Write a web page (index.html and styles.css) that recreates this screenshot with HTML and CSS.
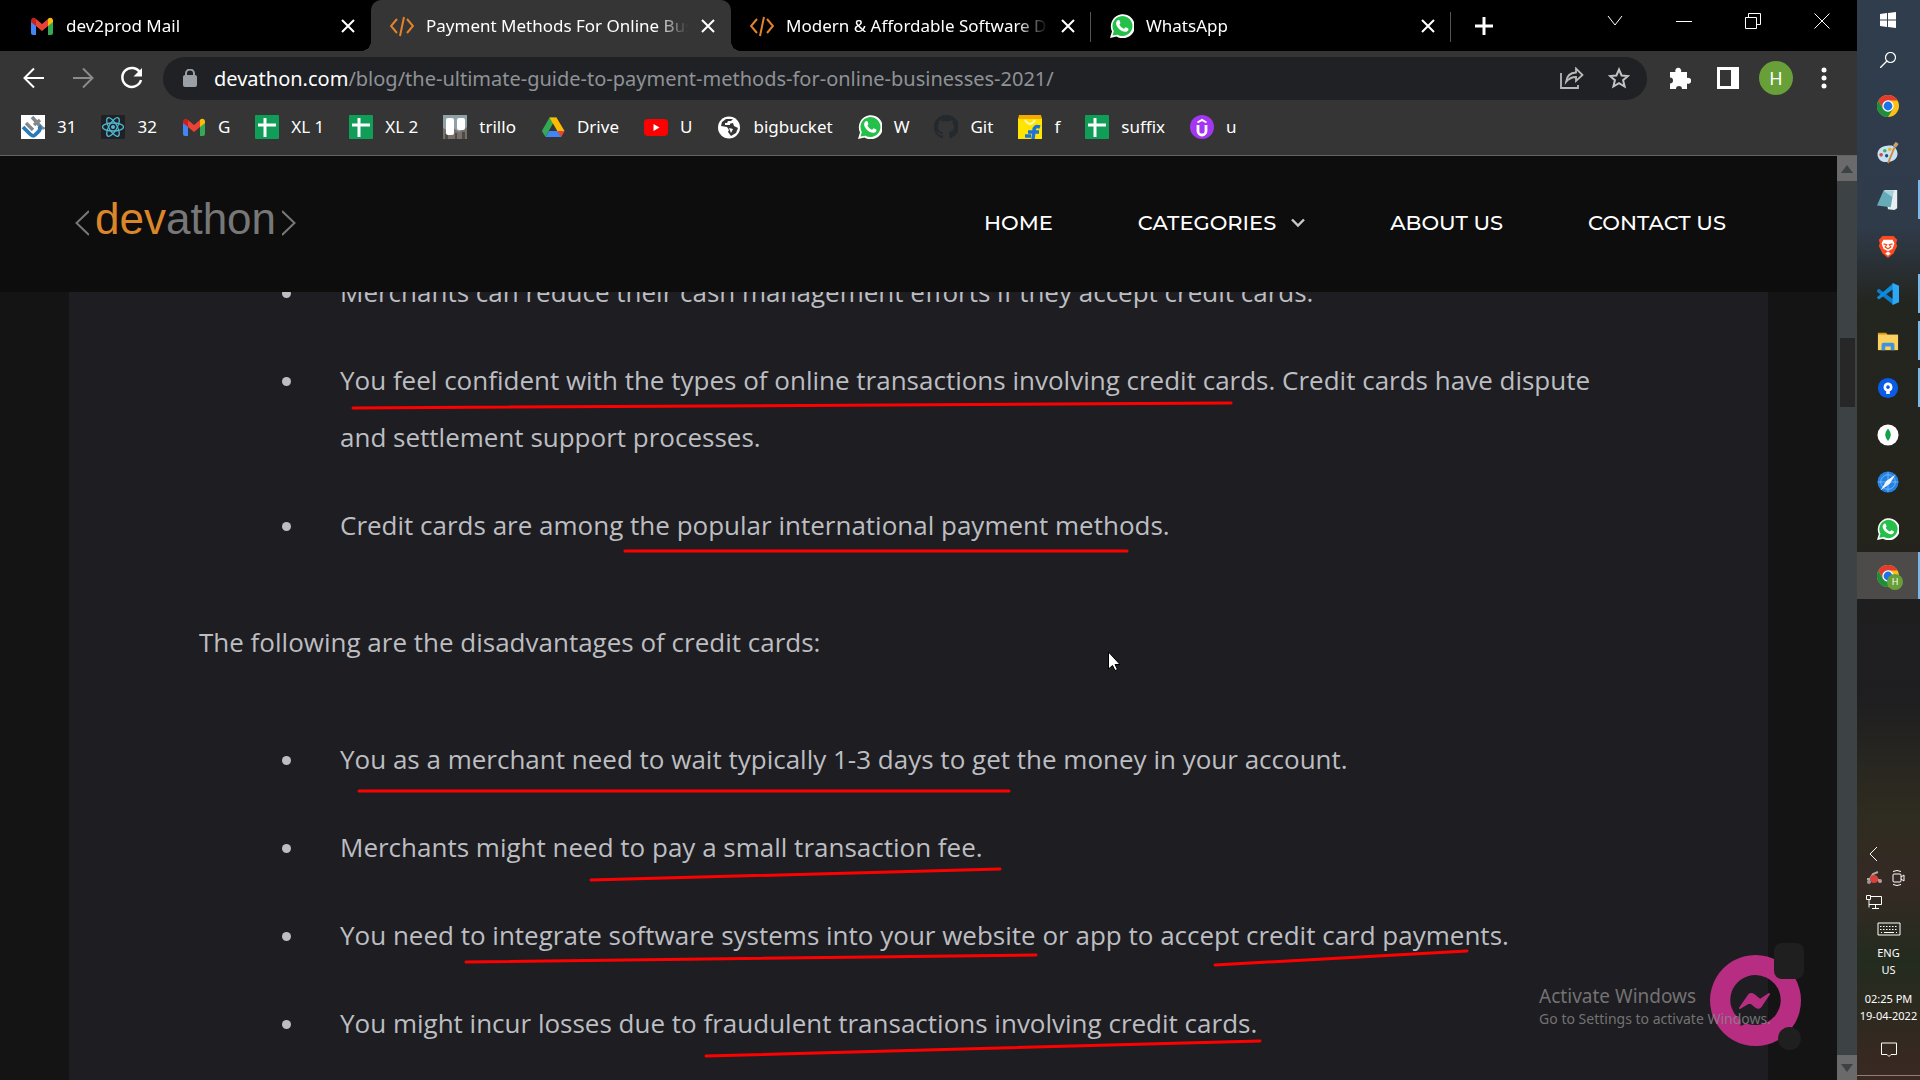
FILE: index.html
```
<!DOCTYPE html>
<html lang="en">
<head>
<meta charset="utf-8">
<title>Payment Methods For Online Businesses</title>
<link rel="stylesheet" href="styles.css">
</head>
<body>
<svg class="defs" aria-hidden="true">
  <symbol id="gmail" viewBox="0 0 24 24"><path fill="#4285f4" d="M1 6v13q0 2 2 2h3V10z"/><path fill="#34a853" d="M18 10v11h3q2 0 2-2V6z"/><path fill="#ea4335" d="M6 5l6 5 6-5v7l-6 5-6-5z"/><path fill="#fbbc04" d="M18 12V5l1-1q3-1 4 2v2z"/><path fill="#c5221f" d="M1 8V6q1-3 4-2l1 1v7z"/></symbol>
  <symbol id="code" viewBox="0 0 24 24"><path fill="none" stroke="#e5832a" stroke-width="2" d="M7 5L1 12l6 7M17 5l6 7-6 7M14 3l-4 19"/></symbol>
  <symbol id="whatsapp" viewBox="0 0 24 24"><path fill="#fff" d="M0 24l2-6.500A12 12 0 1 1 6.500 22.500z"/><path fill="#25c04a" d="M2.500 21.500l1.300-4.500A10 10 0 1 1 7.500 20.700z"/><path fill="#fff" d="M8.500 6c.5 0 .8 0 1 .6l.9 2.200c.2.600-.9 1.500-.9 1.900 1 2 2.500 3.200 4.500 4 .6 0 1.400-1.600 1.900-1.400l2.300 1.100c.8.500-.2 3.400-3 3.400-4.500-.2-9-5-9.100-8.400C6.200 7.500 7.500 6 8.500 6z"/></symbol>
  <symbol id="sheet" viewBox="0 0 24 24"><rect width="24" height="24" rx="1" fill="#0f9d58"/><path stroke="#fff" stroke-width="3" d="M10 3v19M3 10h18"/></symbol>
  <symbol id="close" viewBox="0 0 14 14"><path fill="none" stroke="#fff" stroke-width="2" d="M1 1l12 12M13 1L1 13"/></symbol>
  <symbol id="chrome" viewBox="0 0 24 24"><circle cx="12" cy="12" r="12" fill="#fbc116"/><path fill="#e33b2e" d="M1.600 6A12 12 0 0 1 22.400 6H12L6.500 15z"/><path fill="#1e8e3e" d="M1.600 6A12 12 0 0 0 12 24l5.500-9-5.500 3-5.500-3z"/><circle cx="12" cy="12" r="6.200" fill="#fff"/><circle cx="12" cy="12" r="4.800" fill="#1a73e8"/></symbol>
</svg>

<div class="desktop">
<div class="browser">
  <div class="tabstrip">
    <div class="tab"><svg class="fav"><use href="#gmail"/></svg><span class="tab-title">dev2prod Mail</span><button class="tab-close" aria-label="Close tab"><svg><use href="#close"/></svg></button></div>
    <div class="tab active"><svg class="fav"><use href="#code"/></svg><span class="tab-title">Payment Methods For Online Businesses</span><button class="tab-close" aria-label="Close tab"><svg><use href="#close"/></svg></button></div>
    <div class="tab divided"><svg class="fav"><use href="#code"/></svg><span class="tab-title">Modern &amp; Affordable Software Development</span><button class="tab-close" aria-label="Close tab"><svg><use href="#close"/></svg></button></div>
    <div class="tab divided"><svg class="fav"><use href="#whatsapp"/></svg><span class="tab-title">WhatsApp</span><button class="tab-close" aria-label="Close tab"><svg><use href="#close"/></svg></button></div>
    <button class="new-tab" aria-label="New tab"><svg width="18" height="18" viewBox="0 0 18 18"><path stroke="#fff" stroke-width="3" d="M9 0v18M0 9h18"/></svg></button>
    <div class="window-buttons">
      <button aria-label="Search tabs"><svg width="16" height="16" viewBox="0 0 16 16"><path d="M1 3l7 9 7-9"/></svg></button>
      <button aria-label="Minimise"><svg width="16" height="16" viewBox="0 0 16 16"><path d="M0 8.500h16"/></svg></button>
      <button aria-label="Restore"><svg width="16" height="16" viewBox="0 0 16 16"><path d="M.5 4.500h11v11H.5zM3.500 4V.5h12v11H12"/></svg></button>
      <button aria-label="Close"><svg width="16" height="16" viewBox="0 0 16 16"><path d="M.5.5l15 15M15.500.5l-15 15"/></svg></button>
    </div>
  </div>

  <div class="toolbar">
    <div class="history">
      <button aria-label="Back"><svg width="22" height="22" viewBox="0 0 22 22"><path fill="none" stroke="#fff" stroke-width="2" d="M21 11H2M11 1.500L1.500 11l9.500 9.500"/></svg></button>
      <button aria-label="Forward"><svg width="22" height="22" viewBox="0 0 22 22"><path fill="none" stroke="#8b8b8b" stroke-width="2" d="M1 11h19M11 1.500l9.500 9.500-9.500 9.500"/></svg></button>
      <button aria-label="Reload"><svg width="24" height="24" viewBox="0 0 24 24"><path fill="none" stroke="#fff" stroke-width="2.500" d="M20 6.500A9.500 9.500 0 1 0 21 14"/><path fill="#fff" d="M22 2v8.500h-8.500z"/></svg></button>
    </div>
    <div class="omnibox">
      <svg width="14" height="18" viewBox="0 0 14 18"><rect y="6" width="14" height="12" rx="2" fill="#9aa0a6"/><path fill="none" stroke="#9aa0a6" stroke-width="2" d="M3 7V4.500a4 4 0 0 1 8 0V7"/></svg>
      <span class="url"><b>devathon.com</b>/blog/the-ultimate-guide-to-payment-methods-for-online-businesses-2021/</span>
      <button aria-label="Share"><svg width="24" height="22" viewBox="0 0 24 22"><path fill="none" stroke="#b9b9b9" stroke-width="1.800" d="M1 6v15h17v-3M6 15q1-9 10-9.500V1.500L22.500 8 16 14v-4q-6 0-10 5z"/></svg></button>
      <button aria-label="Bookmark"><svg width="22" height="22" viewBox="0 0 22 22"><path fill="none" stroke="#c3c3c3" stroke-width="2" d="M11 2.500l2.600 6 6.400.5-4.900 4.200 1.500 6.300-5.600-3.400-5.600 3.400 1.500-6.300L2 9l6.400-.5z"/></svg></button>
    </div>
    <div class="actions">
      <button aria-label="Extensions"><svg width="22" height="22" viewBox="0 0 22 22"><path fill="#fff" d="M1 5h5.500a3 3 0 1 1 5.500 0H18v6a3 3 0 1 1 0 5.500V22h-5a3 3 0 0 0-6 0H1v-5.500a3 3 0 0 0 0-6z"/></svg></button>
      <button aria-label="Side panel"><svg width="22" height="22" viewBox="0 0 22 22"><path fill="#fff" fill-rule="evenodd" d="M0 0h22v22H0zM3 3v16h11V3z"/></svg></button>
      <button class="avatar">H</button>
      <button aria-label="Menu"><svg width="22" height="22" viewBox="0 0 22 22"><g fill="#fff"><circle cx="11" cy="3" r="2.500"/><circle cx="11" cy="11" r="2.500"/><circle cx="11" cy="19" r="2.500"/></g></svg></button>
    </div>
  </div>

  <nav class="bookmarks">
    <a href="#"><svg viewBox="0 0 24 24"><rect width="24" height="24" fill="#fff"/><path fill="none" stroke="#85888b" stroke-width="3.500" d="M11 2l8 9q3 3 4 1M5 8l7 7M13 10l6-5"/><path fill="none" stroke="#2a7ab8" stroke-width="3.800" d="M2 12l7 7q3 3 5 1l4-4q2-3 0-5"/></svg>31</a>
    <a href="#"><svg viewBox="0 0 24 24"><rect width="24" height="24" rx="1" fill="#202124"/><g fill="none" stroke="#4fb9d3" stroke-width="1.300"><ellipse cx="12" cy="12" rx="10.500" ry="4"/><ellipse cx="12" cy="12" rx="10.500" ry="4" transform="rotate(60 12 12)"/><ellipse cx="12" cy="12" rx="10.500" ry="4" transform="rotate(120 12 12)"/></g><circle cx="12" cy="12" r="2" fill="#4fb9d3"/></svg>32</a>
    <a href="#"><svg><use href="#gmail"/></svg>G</a>
    <a href="#"><svg><use href="#sheet"/></svg>XL 1</a>
    <a href="#"><svg><use href="#sheet"/></svg>XL 2</a>
    <a href="#"><svg viewBox="0 0 24 24"><path fill="#8ea0a8" d="M0 0h24v24H0z"/><path fill="#77706a" d="M0 13l5 3 5-3 6 4 8-5v12H0z"/><path fill="#4d4944" d="M2 19h3v5H2zM12 18h2v6h-2zM19 17h3v7h-3z"/><rect x="3" y="3" width="8" height="17" rx="2" fill="#fff"/><rect x="14" y="3" width="8" height="12" rx="2" fill="#fff"/></svg>trillo</a>
    <a href="#"><svg viewBox="0 0 24 24"><path fill="#34a853" d="M8.500 2.500h7L4.500 22 .8 16z"/><path fill="#fbbc04" d="M8.500 2.500h7L23.500 16h-7.300z"/><path fill="#4285f4" d="M4.600 22l3.500-6h15.400l-3.500 6z"/><path fill="#ea4335" d="M16.200 16h7.300L20 22z"/><path fill="#353535" d="M12 9l4 7H8z"/></svg>Drive</a>
    <a href="#"><svg viewBox="0 0 24 24"><rect y="4" width="24" height="17" rx="4" fill="#f00"/><path fill="#fff" d="M9.500 9l6 3.500-6 3.500z"/></svg>U</a>
    <a href="#"><svg viewBox="0 0 24 24"><circle cx="12" cy="12.500" r="11" fill="#fff"/><path fill="#353535" d="M9 4l-4 3-1 4 6 1 2 3-1 2 3 4 5-3 2-5-4-2-1-3-4 1-2-1 1-2h3l2-2z"/><path fill="#fff" d="M8 8h5v2H8zM12 13l4 1-2 4z"/></svg>bigbucket</a>
    <a href="#"><svg><use href="#whatsapp"/></svg>W</a>
    <a href="#"><svg viewBox="0 0 24 24"><path fill="#24292e" d="M12 0a12 12 0 0 0-4 23.400c.7 0 1-.3 1-.8v-2.200c-4 .7-4.500-2-5.300-2.700-.4-.5-1.300-.9-1-1.100 2.500-.5 2.600 2.600 5 2.400 1 0 1.200-.8 1.700-1.400C6 17 4 15.500 4 11.600c0-1.300.5-2.400 1.300-3.200-.3-.8-.3-2 .2-3.200 1.200 0 2.300.6 3.300 1.300a12 12 0 0 1 6.200 0c1-.7 2.200-1.300 3.400-1.300.5 1.200.5 2.400.1 3.200.9.800 1.400 1.900 1.400 3.200 0 4-2 5.400-5.300 5.900.6.500.9 1.300.9 2.600v2.500c0 .5.400.9 1 .8A12 12 0 0 0 12 0z"/></svg>Git</a>
    <a href="#"><svg viewBox="0 0 24 24"><path fill="#ffe500" d="M0 3h24v21H0z"/><path fill="#f7a800" d="M1 0h22l1 4H0z"/><path fill="none" stroke="#fff8b0" stroke-width="2" d="M7 5q5 8 10 0"/><path fill="none" stroke="#1c72d8" stroke-width="3.500" d="M22 12q-6-2-6 4l-1 8M10 17h11M7 21h6"/></svg>f</a>
    <a href="#"><svg><use href="#sheet"/></svg>suffix</a>
    <a href="#"><svg viewBox="0 0 24 24"><circle cx="12" cy="12" r="12" fill="#a435f0"/><path fill="none" stroke="#fff" stroke-width="2.800" d="M8 10v6a4 4 0 0 0 8 0v-6"/><path fill="none" stroke="#fff" stroke-width="2" d="M7.500 7.500L12 4.800l4.500 2.700"/></svg>u</a>
  </nav>

  <div class="viewport">
    <div class="page">
      <header class="site-header">
        <a class="logo" href="#">
          <svg width="14" height="26" viewBox="0 0 14 26"><path d="M14 1L1.500 13 14 25"/></svg><span><strong>dev</strong>athon</span><svg width="14" height="26" viewBox="0 0 14 26"><path d="M0 1l12.500 12L0 25"/></svg>
        </a>
        <nav class="site-nav">
          <a href="#">HOME</a>
          <a href="#">CATEGORIES <svg width="14" height="10" viewBox="0 0 14 10"><path fill="none" stroke="#c8c8c8" stroke-width="2.400" d="M1 1.500l6 6 6-6"/></svg></a>
          <a href="#">ABOUT US</a>
          <a href="#">CONTACT US</a>
        </nav>
      </header>
      <article class="article">
        <ul>
          <li><span>Merchants can reduce their cash management efforts if they accept credit cards.</span></li>
          <li><span>You feel confident with the types of online transactions involving credit cards. Credit cards have dispute and settlement support processes.</span></li>
          <li><span>Credit cards are among the popular international payment methods.</span></li>
        </ul>
        <p>The following are the disadvantages of credit cards:</p>
        <ul>
          <li><span>You as a merchant need to wait typically 1-3 days to get the money in your account.</span></li>
          <li><span>Merchants might need to pay a small transaction fee.</span></li>
          <li><span>You need to integrate software systems into your website or app to accept credit card payments.</span></li>
          <li><span>You might incur losses due to fraudulent transactions involving credit cards.</span></li>
        </ul>
      </article>
      <div class="chat">
        <svg width="94" height="112" viewBox="0 0 94 112"><path fill="#b72d82" fill-rule="evenodd" d="M45.500 12a45.500 45.500 0 1 0 .01 0zM45.500 32a25.500 25 0 1 1-9 48.500l-6 2.500v-6A25.500 25 0 0 1 45.500 32z"/><path fill="#b72d82" stroke="#b72d82" stroke-width="2" stroke-linejoin="round" d="M30 65l9-13q2-2 5 0l6 5 9-6-8 12q-2 3-5 1l-6-5z"/><rect x="64" width="30" height="36" rx="8" fill="#1f1f1f"/><circle cx="79.500" cy="95.500" r="11.500" fill="#1f1f1f"/></svg>
      </div>
    </div>
    <div class="scrollbar">
      <div class="arrow"><svg width="12" height="8" viewBox="0 0 12 8"><path fill="#3d4245" d="M6 0l6 8H0z"/></svg></div>
      <div class="track"><div class="thumb"></div></div>
      <div class="arrow"><svg width="12" height="8" viewBox="0 0 12 8"><path fill="#3d4245" d="M0 0h12L6 8z"/></svg></div>
    </div>
  </div>
</div>

<aside class="taskbar">
  <button class="short" aria-label="Start"><svg width="16" height="16" viewBox="0 0 16 16"><path fill="#fff" d="M0 2l7-1v6.500H0zM8 .9L16 0v7.500H8zM0 8.500h7V15l-7-1zM8 8.500h8V16l-8-1z"/></svg></button>
  <button class="short" aria-label="Search"><svg width="16" height="16" viewBox="0 0 16 16"><circle cx="10.500" cy="5.500" r="5" fill="none" stroke="#fff" stroke-width="1.200"/><path stroke="#fff" stroke-width="1.300" d="M7 9L0 16"/></svg></button>
  <button aria-label="Chrome"><svg><use href="#chrome"/></svg></button>
  <button aria-label="Paint"><svg viewBox="0 0 24 24"><path fill="#c5e3f5" d="M11 4C4 4-1 10 1 16s9 7 15 5 8-8 5-13-6-4-10-4z"/><circle cx="4.500" cy="14" r="2" fill="#d94b43"/><circle cx="8.500" cy="9.500" r="2" fill="#53b04c"/><circle cx="14" cy="8" r="2" fill="#efb32c"/><circle cx="10.500" cy="15" r="1.800" fill="#1f4f7d"/><path stroke="#d48634" stroke-width="2" d="M12 23l7-17"/><path stroke="#c4a26f" stroke-width="4" d="M19 5l3-4"/></svg></button>
  <button class="open" aria-label="Notepad"><svg viewBox="0 0 24 24"><path fill="#e6eef0" d="M8 1h14v20l-3 2-7-1z"/><path fill="#67abb9" d="M7 2h11l-3 18-15-2z"/><path fill="#a5d3dc" d="M7 2h11l-1 7z"/></svg></button>
  <button aria-label="Brave"><svg viewBox="0 0 24 24"><path fill="#fb4a1f" d="M6 0h12l4 4-1 4 1 3-4 8-6 5-6-5-4-8 1-3-1-4z"/><path fill="#fff" d="M7 4h10l2 4-2 6-5 2.500L7 14 5 8zM12 17l3 2-3 2.500L9 19z"/><path stroke="#fb4a1f" stroke-width="1.400" fill="none" d="M7 8.500l3.500 1L9 12l3 2 3-2-1.500-2.500 3.500-1"/></svg></button>
  <button class="open" aria-label="VS Code"><svg viewBox="0 0 24 24"><path fill="#0b7dca" d="M0 8l2-1.800L18 18v6L0 9.500z"/><path fill="#0e8bdb" d="M0 15.500L18 0v6.500L2 18 0 16z"/><path fill="#2da8f4" d="M17 0l7 3v18l-7 3z"/></svg></button>
  <button class="open" aria-label="Explorer"><svg viewBox="0 0 24 24"><path fill="#d99a14" d="M1 3h9l2 3H1z"/><path fill="#fcd060" d="M1 5h22v17H1z"/><path fill="#3d94d8" d="M5 22v-6q0-2 2-2h10q2 0 2 2v6h-4v-4H9v4z"/></svg></button>
  <button class="open" aria-label="Sourcetree"><svg viewBox="0 0 24 24"><circle cx="12" cy="12" r="11" fill="#0a5ce6"/><path fill="#fff" fill-rule="evenodd" d="M12 6a5 5 0 0 1 2 9.500v3h-4v-3A5 5 0 0 1 12 6zm0 3a2 2 0 1 0 .01 0z"/></svg></button>
  <button aria-label="MongoDB"><svg viewBox="0 0 24 24"><circle cx="12" cy="12" r="11.500" fill="#fff"/><path fill="#13a24b" d="M12 5q6 7 0 13.500Q6 12 12 5z"/></svg></button>
  <button aria-label="Safari"><svg viewBox="0 0 24 24"><circle cx="12" cy="12" r="11.500" fill="#2381e3"/><circle cx="12" cy="12" r="8" fill="none" stroke="#76b7f3"/><path stroke="#76b7f3" d="M12 1v22M1 12h22"/><path fill="#f2f6fa" d="M20 4l-6 10-10 7 6-10z"/></svg></button>
  <button aria-label="WhatsApp"><svg><use href="#whatsapp"/></svg></button>
  <button class="open current" aria-label="Chrome, profile H"><svg><use href="#chrome"/></svg><span class="profile">H</span></button>

  <div class="tray">
    <div class="tray-icons">
      <svg viewBox="0 0 16 16"><path d="M11 1L4 8l7 7"/></svg><span></span>
      <svg viewBox="0 0 16 16"><path stroke="#aaa" stroke-width="2" d="M2 12l5-8 5-2M10 8l5 4M1 9h6"/><circle cx="8" cy="9" r="4" fill="#d94038" stroke="none"/><circle cx="3" cy="12" r="2" fill="#999" stroke="none"/><circle cx="14" cy="11" r="2" fill="#b99" stroke="none"/></svg>
      <svg viewBox="0 0 16 16"><rect x="3" y="4" width="8" height="8" rx="1"/><path d="M11 7l3-2v6l-3-2M3 1.500q4-2 8 0M3 14.500q4 2 8 0"/></svg>
      <svg viewBox="0 0 16 16"><path d="M5 2.500h10.500v8H3M.5 1.500h4v4h-4zM3 6v7.500M9.500 11v3M6 14.500h7"/></svg><span></span>
    </div>
    <svg width="24" height="14" viewBox="0 0 24 14"><path d="M1 1h22v12H1z"/><path stroke-dasharray="1.500 1.500" d="M3 4.500h18M3 7.500h18"/><path d="M4 10.500h1M7 10.500h10M19 10.500h1"/></svg>
    <div class="lang">ENG<br>US</div>
    <div class="clock">02:25 PM<br>19-04-2022</div>
    <svg width="16" height="16" viewBox="0 0 16 16"><path d="M.5 1h15v11.500H10L8 14.500l-2-2H.5z"/></svg>
    <div class="show-desktop"></div>
  </div>
</aside>
</div>

<div class="watermark"><div class="watermark-title">Activate Windows</div><div>Go to Settings to activate Windows.</div></div>

<svg class="markup" aria-hidden="true">
  <g stroke="#f00" stroke-width="3" stroke-linecap="round">
    <path d="M353 408L1231 403M625 551H1127M359 791H1009M591 880L1000 869M466 962L1036 955M1215 965L1467 951M706 1056L1260 1041"/>
  </g>
  <path fill="#fff" stroke="#000" d="M1108.500 652v17l4-3.500 2.500 5 2.500-1-2.500-5h5z"/>
</svg>
</body>
</html>
```
FILE: styles.css
```
* { box-sizing: border-box; }
body {
  margin: 0;
  height: 100vh;
  overflow: hidden;
  position: relative;
  background: #141414;
  font-family: "Segoe UI", "Noto Sans", sans-serif;
  color: #fff;
}
a { color: inherit; text-decoration: none; }
button {
  margin: 0; padding: 0; border: 0;
  background: none; color: inherit; font: inherit;
  display: flex; align-items: center; justify-content: center;
}
svg { flex: none; display: block; }
.defs { position: absolute; width: 0; height: 0; }

.desktop { display: flex; height: 100%; }
.browser { flex: 1; min-width: 0; display: flex; flex-direction: column; }

/* Tab strip */
.tabstrip { display: flex; height: 51px; padding-left: 11px; background: #000; }
.tab {
  position: relative;
  flex: 0 1 360px; min-width: 0;
  display: flex; align-items: center;
  padding: 0 15px 0 19px; gap: 12px;
  font-size: 17px;
}
.active { background: #353535; border-radius: 10px 10px 0 0; }
.active::before, .active::after {
  content: ""; position: absolute; bottom: 0; width: 10px; height: 10px;
}
.active::before { left: -10px; background: radial-gradient(circle at 0 0, #000 10px, #353535 10px); }
.active::after { right: -10px; background: radial-gradient(circle at 100% 0, #000 10px, #353535 10px); }
.divided::after {
  content: ""; position: absolute; right: 0; top: 12px; width: 1px; height: 30px; background: #555;
}
.fav { width: 24px; height: 24px; }
.tab-title {
  flex: 1; overflow: hidden; white-space: nowrap;
  mask-image: linear-gradient(to right, #000 calc(100% - 32px), transparent);
}
.tab-close { width: 16px; height: 16px; }
.tab-close svg { width: 14px; height: 14px; }
.new-tab { width: 66px; }
.window-buttons { display: flex; margin-left: auto; height: 42px; padding-right: 1px; }
.window-buttons button { width: 69px; }
.window-buttons path { fill: none; stroke: #fff; }

/* Toolbar */
.toolbar { display: flex; align-items: center; height: 54px; background: #353535; }
.history { display: flex; width: 163px; padding-left: 9px; }
.history button { width: 49px; }
.omnibox {
  flex: 1; height: 43px; display: flex; align-items: center; gap: 24px;
  padding: 0 17px 0 20px; border-radius: 22px; background: #202124;
}
.omnibox > svg { margin-right: -7px; }
.url { flex: 1; font-size: 20px; color: #8f9296; white-space: nowrap; }
.url b { font-weight: 400; color: #fff; }
.actions { display: flex; align-items: center; padding: 0 9px; }
.actions button { width: 48px; height: 34px; }
.actions .avatar { width: 34px; margin: 0 7px; border-radius: 50%; background: #689f38; font-size: 18px; }

/* Bookmarks bar */
.bookmarks {
  display: flex; gap: 25px; height: 51px; padding: 0 21px 7px;
  align-items: center; background: #353535; border-bottom: 1px solid #636363;
  font-size: 17px; white-space: nowrap;
}
.bookmarks a { display: flex; align-items: center; gap: 12px; }
.bookmarks svg { width: 24px; height: 24px; }

/* Web page */
.viewport { flex: 1; min-height: 0; display: flex; }
.page { flex: 1; min-width: 0; position: relative; overflow: hidden; background: #141414; }
.site-header {
  position: relative; z-index: 1;
  display: flex; align-items: center; justify-content: space-between;
  height: 136px; padding: 0 111px 0 75px; background: #0d0d0d;
}
.logo {
  display: flex; align-items: center; gap: 6px; padding-bottom: 10px;
  font: 44px/50px "Liberation Sans", Arial, sans-serif; color: #777;
}
.logo strong { font-weight: 400; color: #dc862b; }
.logo path { fill: none; stroke: #777; stroke-width: 2; }
.logo svg { margin-top: 7px; }
.site-nav { display: flex; gap: 85px; font: 500 21px/28px Montserrat, Inter, sans-serif; padding-bottom: 2px; }
.site-nav a { display: flex; align-items: center; gap: 15px; }
.article {
  margin: -28px 69px 0;
  padding: 0 140px 60px 130px;
  background: #1e1d21;
  color: #bcbec1;
  font: 26px/57px "Open Sans", "Noto Sans", sans-serif;
}
.article p { margin: 60px 0; }
.article ul { margin: 0; padding: 0 0 0 83px; list-style: none; display: flex; flex-direction: column; gap: 31px; }
.article li { display: flex; gap: 49px; }
.article li::before {
  content: ""; flex: none; width: 9px; height: 9px; margin-top: 25px;
  border-radius: 50%; background: #bcbec1;
}
.chat { position: absolute; right: 33px; bottom: 25px; }

.scrollbar { width: 20px; display: flex; flex-direction: column; background: #3d4245; }
.arrow { height: 25px; display: flex; align-items: center; justify-content: center; background: #6a6a6a; }
.track { flex: 1; padding: 157px 2px 0 3px; }
.thumb { height: 69px; background: #272727; }

/* Taskbar */
.taskbar {
  width: 63px; display: flex; flex-direction: column;
  background: linear-gradient(#2f3d4d 0, #303b4a 21%, #23251f 28%, #24231c 50%, #1f1e1f 56%, #1e1d20 64%, #2e2c20 75%, #352a24 82%, #232b1f 89%, #30291f 95%, #3b2924 100%);
}
.taskbar button { position: relative; height: 47px; padding-right: 1px; }
.taskbar button svg { width: 22px; height: 22px; }
.taskbar .short { height: 40px; }
.taskbar .short + :not(.short) { margin-top: 2px; }
.taskbar .short svg { width: 16px; height: 16px; }
.taskbar .open::after {
  content: ""; position: absolute; right: 0; top: 4px; bottom: 4px; width: 2px; background: #76b9ed;
}
.taskbar .current { background: #4c4b49; }
.taskbar .current::after { top: 0; bottom: 0; }
.profile {
  position: absolute; left: 30px; top: 22px; width: 16px; height: 16px;
  border-radius: 50%; background: #689f38; font-size: 9px; line-height: 16px; text-align: center;
}
.tray {
  margin-top: auto; display: flex; flex-direction: column; align-items: center;
  font-size: 11px; line-height: 17px; text-align: center; white-space: nowrap;
}
.tray svg { fill: none; stroke: #fff; stroke-width: 1; }
.tray-icons { display: grid; grid-template-columns: 16px 16px; gap: 8px; margin-bottom: 12px; padding-right: 6px; }
.tray-icons svg { width: 16px; height: 16px; }
.lang { margin: 8px 0 12px; }
.clock { margin-bottom: 18px; }
.show-desktop { width: 100%; height: 5px; margin-top: 17px; border-top: 1px solid #8b8178; }

.watermark {
  position: absolute; right: 149px; bottom: 51px;
  color: #8a8a8acc; font-size: 14px; line-height: 20px;
}
.watermark-title { font-size: 19px; line-height: 26px; }
.markup { position: absolute; inset: 0; width: 100%; height: 100%; pointer-events: none; }
```
